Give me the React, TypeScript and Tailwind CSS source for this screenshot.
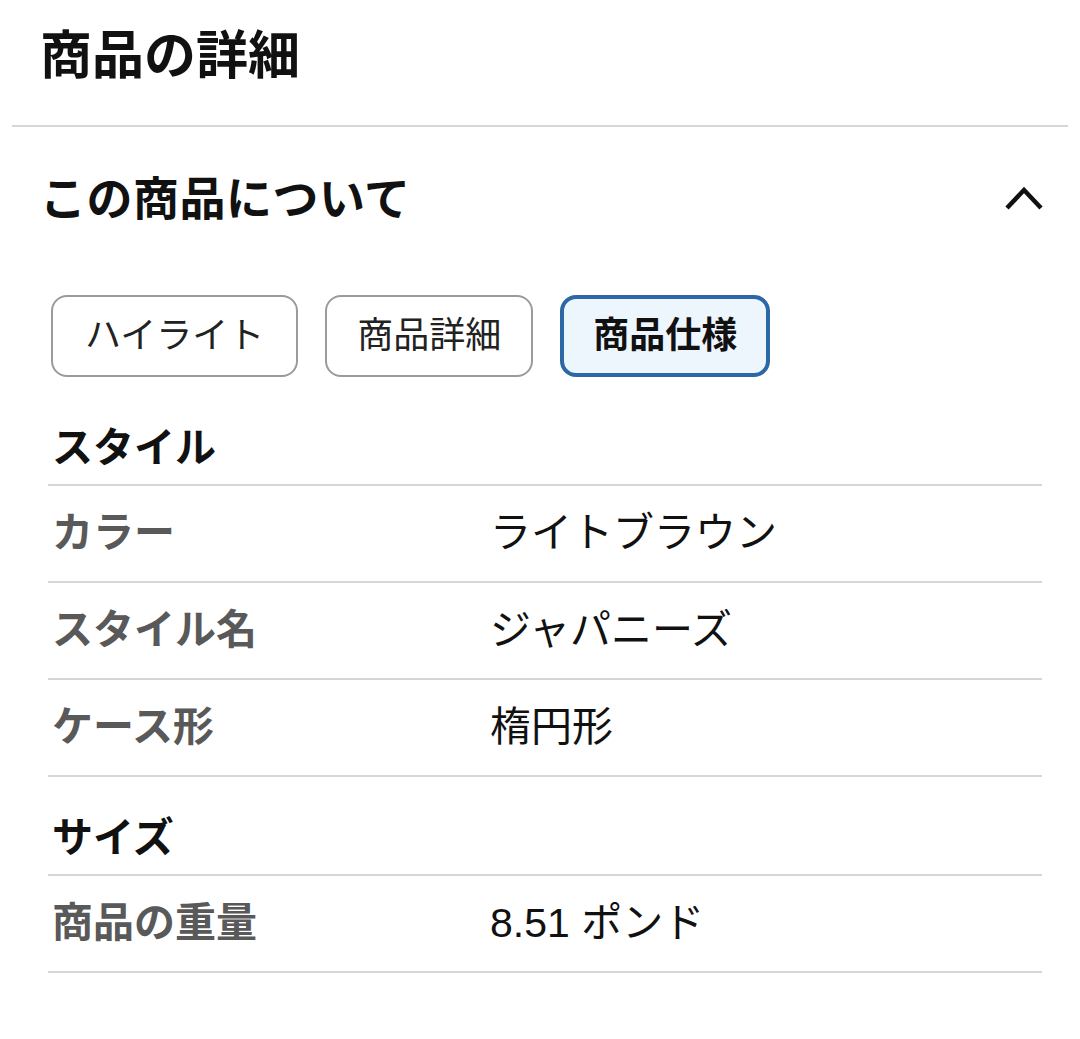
const font = {
  fontFamily: '"Liberation Sans", "Noto Sans CJK JP", sans-serif',
};

type Row = { label: string; value: string };

const sections: { title: string; rows: Row[] }[] = [
  {
    title: "スタイル",
    rows: [
      { label: "カラー", value: "ライトブラウン" },
      { label: "スタイル名", value: "ジャパニーズ" },
      { label: "ケース形", value: "楕円形" },
    ],
  },
  {
    title: "サイズ",
    rows: [{ label: "商品の重量", value: "8.51 ポンド" }],
  },
];

const tabs = ["ハイライト", "商品詳細", "商品仕様"];

function Chevron() {
  return (
    <svg width="40" height="26" viewBox="0 0 40 26" className="mr-[-2px]">
      <polyline
        points="3,22 20,4 37,22"
        fill="none"
        stroke="#111"
        strokeWidth="4.5"
        strokeLinejoin="miter"
      />
    </svg>
  );
}

export default function App() {
  return (
    <div className="w-[1080px] min-h-[1039px] bg-white text-[#111]" style={font}>
      <div className="pl-[40px] pt-[24px]">
        <h1 className="text-[52px] leading-[64px] font-bold">商品の詳細</h1>
      </div>
      <div className="mx-3 mt-[37px] h-[2px] bg-[#d6d6d9]" />

      <div className="ml-[48px] w-[994px]">
        <div className="flex items-center justify-between pt-[44px]">
          <h2 className="-ml-[8px] text-[46px] leading-[56px] font-bold tracking-[0.5px]">この商品について</h2>
          <Chevron />
        </div>

        <div className="mt-[68px] ml-[3px] flex gap-[27px]">
          {tabs.map((t, i) =>
            i === 2 ? (
              <div
                key={t}
                className="h-[82px] px-[29px] flex items-center rounded-[16px] border-[4px] border-[#2c67a6] bg-[#edf5fd] text-[36px] font-bold"
              >
                {t}
              </div>
            ) : (
              <div
                key={t}
                className={
                  "h-[82px] flex items-center rounded-[16px] border-2 border-[#9b9b9b] bg-white text-[36px] text-[#222] " +
                  (i === 0 ? "px-[32px]" : "px-[30px]")
                }
              >
                {t}
              </div>
            )
          )}
        </div>

        <div className="mt-[8px]">
          {sections.map((s, si) => (
            <div key={s.title}>
              <div
                className={
                  "pb-[12px] border-b-2 border-[#d6d6d6] " +
                  (si === 0 ? "pt-[39px]" : "pt-[37px]")
                }
              >
                <h3 className="pl-[4px] text-[41px] leading-[48px] font-bold">{s.title}</h3>
              </div>
              {s.rows.map((r) => (
                <div
                  key={r.label}
                  className="grid grid-cols-[442px_1fr] items-center h-[97px] border-b-2 border-[#d6d6d6] pb-[2px]"
                >
                  <span className="pl-[4px] text-[41px] leading-[48px] font-bold text-[#595959]">{r.label}</span>
                  <span className="text-[41px] leading-[48px] text-[#111]">{r.value}</span>
                </div>
              ))}
            </div>
          ))}
        </div>
      </div>
    </div>
  );
}
